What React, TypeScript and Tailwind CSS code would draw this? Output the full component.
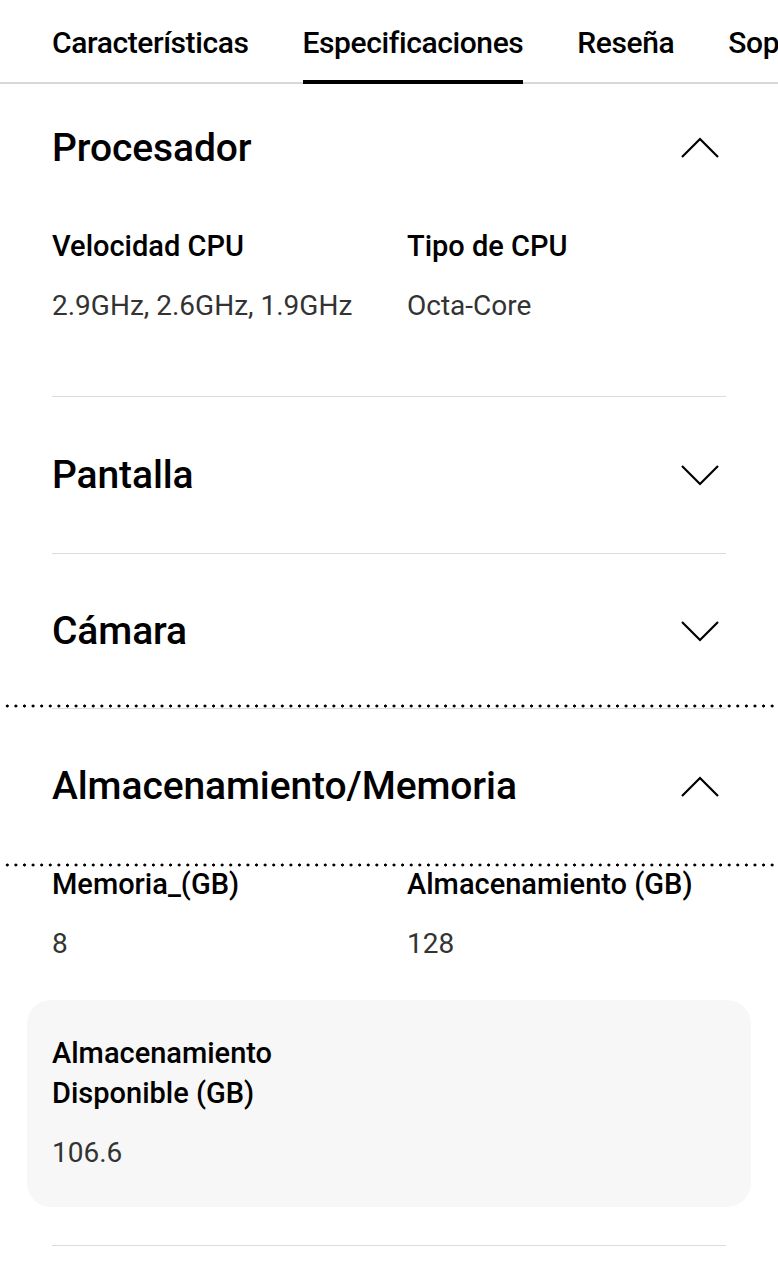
import { ReactNode } from "react";

const font = { fontFamily: "Roboto, 'Noto Sans', sans-serif" };

function Chevron({ up }: { up?: boolean }) {
    return (
        <svg width="40" height="40" viewBox="0 0 40 40" fill="none" className="shrink-0">
            <path
                d={up ? "M2 29 L20 11 L38 29" : "M2 11 L20 29 L38 11"}
                stroke="#000"
                strokeWidth="2.2"
                strokeLinecap="butt"
                strokeLinejoin="miter"
            />
        </svg>
    );
}

function Spec({ label, value }: { label: ReactNode; value: string }) {
    return (
        <div className="flex flex-col">
            <span className="text-[29px] leading-[40px] font-medium text-black">{label}</span>
            <span className="mt-6 text-[28px] leading-8 text-[#333]">{value}</span>
        </div>
    );
}

function Header({ title, up, h }: { title: string; up?: boolean; h: string }) {
    return (
        <div className={`flex items-center justify-between pr-[6px] ${h}`}>
            <h2 className="text-[39px] font-medium text-black tracking-[-0.1px]">{title}</h2>
            <Chevron up={up} />
        </div>
    );
}

function Dots({ top }: { top: string }) {
    return (
        <div
            className={`absolute left-[3px] right-0 h-[4px] bg-[radial-gradient(circle,#000_1.3px,transparent_1.8px)] bg-[length:8.6px_4px] ${top}`}
        />
    );
}

export default function App() {
    const tabs = ["Características", "Especificaciones", "Reseña", "Soporte"];
    return (
        <div className="relative w-[778px] h-[1280px] overflow-hidden bg-white" style={font}>
            {/* tabs */}
            <div className="h-[84px] border-b-2 border-[#d8d8d8] flex items-stretch gap-[54px] pl-[52px] whitespace-nowrap">
                {tabs.map((t, i) => (
                    <div
                        key={t}
                        className={`relative flex items-center pt-[2px] text-[30px] font-medium tracking-[-0.4px] text-black ${i === 1 ? "after:absolute after:left-0 after:right-0 after:-bottom-[2px] after:h-[4px] after:bg-black" : ""}`}
                    >
                        {t}
                    </div>
                ))}
            </div>

            <div className="mx-[52px]">
                {/* Procesador */}
                <div className="border-b border-[#dcdcdc]">
                    <Header title="Procesador" up h="h-[128px]" />
                    <div className="grid grid-cols-[355px_1fr] pt-[14px] pb-[74px]">
                        <Spec label="Velocidad CPU" value="2.9GHz, 2.6GHz, 1.9GHz" />
                        <Spec label="Tipo de CPU" value="Octa-Core" />
                    </div>
                </div>

                <div className="border-b border-[#dcdcdc]">
                    <Header title="Pantalla" h="h-[156px]" />
                </div>

                <div className="border-b border-[#dcdcdc]">
                    <Header title="Cámara" h="h-[154px]" />
                </div>

                {/* Almacenamiento/Memoria */}
                <div className="border-b border-[#dcdcdc]">
                    <Header title="Almacenamiento/Memoria" up h="h-[155px]" />
                    <div className="grid grid-cols-[355px_1fr]">
                        <Spec label="Memoria_(GB)" value="8" />
                        <Spec label="Almacenamiento (GB)" value="128" />
                    </div>
                    <div className="mt-10 mb-[38px] -mx-[25px] rounded-[24px] bg-[#f7f7f7] px-[25px] pt-[33px] pb-[38px]">
                        <Spec
                            label={
                                <>
                                    Almacenamiento
                                    <br />
                                    Disponible (GB)
                                </>
                            }
                            value="106.6"
                        />
                    </div>
                </div>
            </div>

            <Dots top="top-[704px]" />
            <Dots top="top-[863px]" />
        </div>
    );
}
